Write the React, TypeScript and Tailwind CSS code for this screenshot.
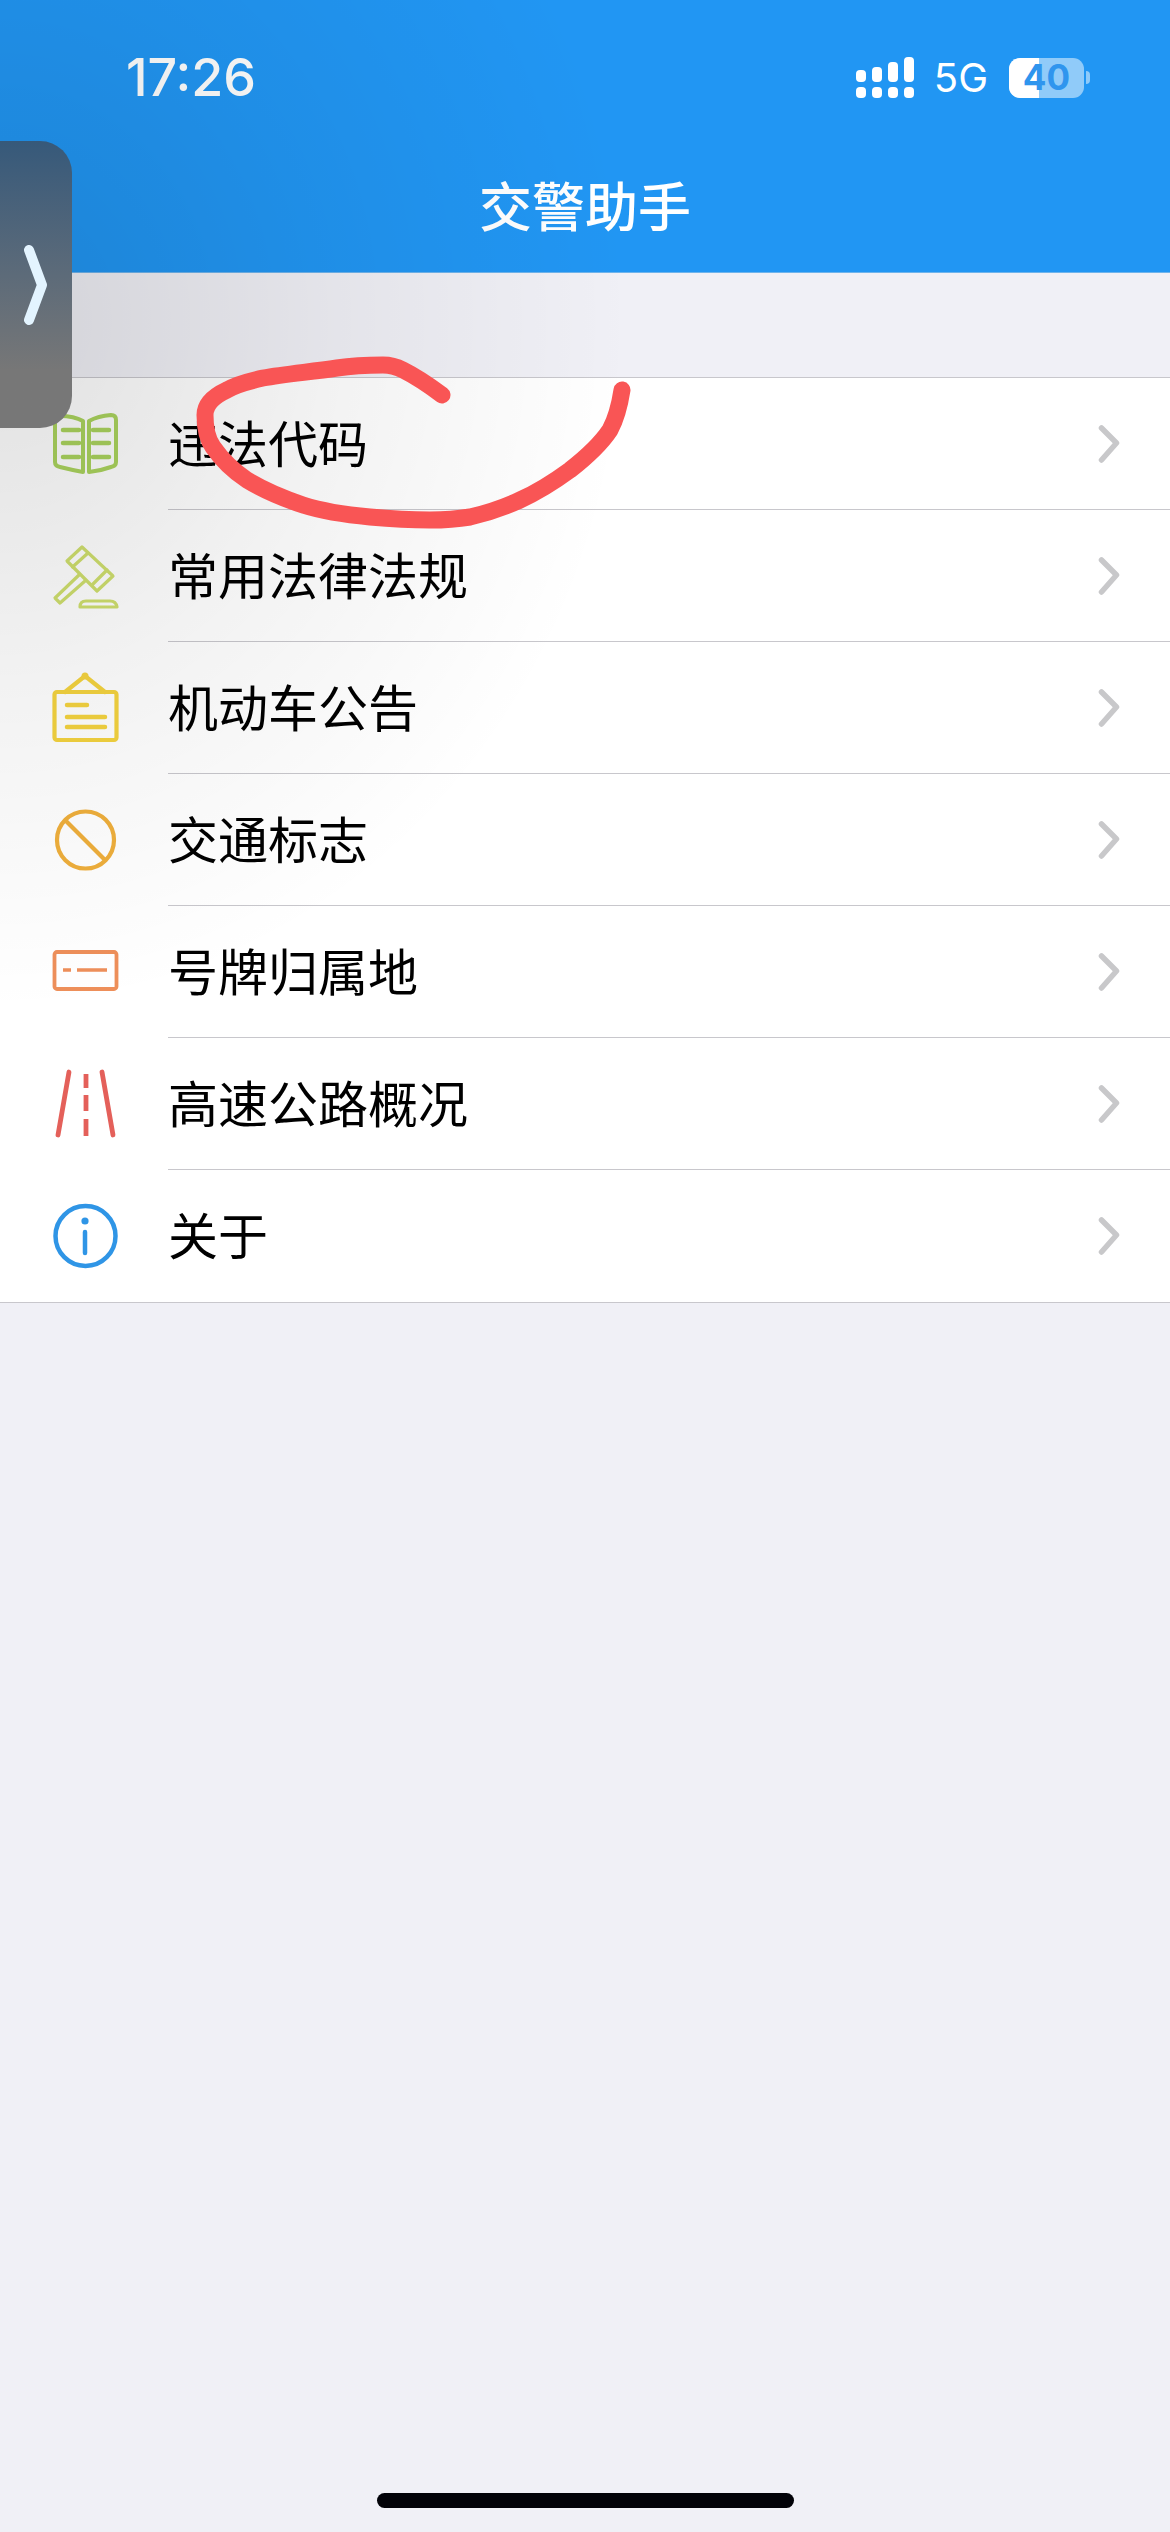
import React from 'react'

const cjk = 'font-["Noto_Sans_CJK_SC","Noto_Sans",sans-serif]'

// 菜单图标
const BookIcon = () => (
  <svg viewBox="0 0 66 66" className="w-[66px] h-[66px] overflow-visible" fill="none" stroke="#ABD45E" strokeLinecap="round" strokeLinejoin="round">
    <path strokeWidth="4" d="M3 9 Q3 5 8 5 Q22 5 31 10 L31 61 Q20 59 8 56 Q3 55 3 51 Z" />
    <path strokeWidth="4" d="M64 9 Q64 4 59 4 Q46 5 37 10 L37 61 Q48 60 59 56 Q64 55 64 51 Z" />
    <path strokeWidth="4.5" d="M11 19 H27 M11 32 H27 M11 46 H27 M41 19 H57 M41 32 H57 M41 46 H57" />
  </svg>
)

const GavelIcon = () => (
  <svg viewBox="0 0 66 66" className="w-[66px] h-[66px] overflow-visible" fill="none" stroke="#CFDF6E" strokeWidth="3.2" strokeLinejoin="round" strokeLinecap="round">
    <path d="M30 4 L15 18 L45 48 L61 33 Z" />
    <path d="M36 10 L20.5 24 M55 27 L40 42" />
    <path d="M27 32 L3 55 L8 60 L33 38" />
    <path d="M28 64 Q28 58 34 58 H58 Q64 58 65 64 Z" />
  </svg>
)

const BoardIcon = () => (
  <svg viewBox="0 0 66 66" className="w-[66px] h-[66px] overflow-visible" fill="none" stroke="#F4D33F" strokeLinecap="round" strokeLinejoin="round">
    <rect x="2.5" y="17" width="62" height="48" rx="2.5" strokeWidth="4.2" />
    <path strokeWidth="4.2" d="M13 17 L33 1 L53 17" />
    <circle cx="33" cy="1" r="3.5" fill="#F4D33F" stroke="none" />
    <path strokeWidth="4.5" d="M15 30 H35 M15 42 H53 M15 52 H53" />
  </svg>
)

const ForbidIcon = () => (
  <svg viewBox="0 0 66 66" className="w-[66px] h-[66px] overflow-visible" fill="none" stroke="#EFAF3C" strokeWidth="4.2">
    <circle cx="33.5" cy="33" r="28.5" />
    <path d="M13 13 L53 53" />
  </svg>
)

const PlateIcon = () => (
  <svg viewBox="0 0 66 66" className="w-[66px] h-[66px] overflow-visible" fill="none" stroke="#EE8F5A" strokeLinejoin="round">
    <rect x="2.5" y="13" width="62" height="37" rx="2.5" strokeWidth="3.8" />
    <path strokeWidth="3.5" d="M11 31 H19 M25 31 H55" />
  </svg>
)

const RoadIcon = () => (
  <svg viewBox="0 0 66 66" className="w-[66px] h-[66px] overflow-visible" fill="none" stroke="#E4605A" strokeWidth="4.8" strokeLinecap="round">
    <path d="M17 1 L6 64 M50 1 L61 64" />
    <path strokeLinecap="butt" d="M34 3 V17 M34 24 V40 M34 48 V65" />
  </svg>
)

const InfoIcon = () => (
  <svg viewBox="0 0 66 66" className="w-[66px] h-[66px] overflow-visible" fill="none" stroke="#2F95E6" strokeWidth="4.5" strokeLinecap="round">
    <circle cx="33.5" cy="33" r="30" />
    <circle cx="33" cy="18" r="3.6" fill="#2F95E6" stroke="none" />
    <path d="M33 29 V50" />
  </svg>
)

const menus = [
  { title: '违法代码', icon: <BookIcon /> },
  { title: '常用法律法规', icon: <GavelIcon /> },
  { title: '机动车公告', icon: <BoardIcon /> },
  { title: '交通标志', icon: <ForbidIcon /> },
  { title: '号牌归属地', icon: <PlateIcon /> },
  { title: '高速公路概况', icon: <RoadIcon /> },
  { title: '关于', icon: <InfoIcon /> },
]

const signalBars = ['h-[12px]', 'h-[15px]', 'h-[20px]', 'h-[25px]']

const App: React.FC = () => {
  return (
    <div className="relative min-h-[2532px] flex flex-col bg-[#F0F0F6] overflow-hidden">
      {/* 顶部栏 */}
      <header className="h-[273px] bg-[#2196F3] text-white border-b border-[#6fb4ec]">
        <div className="h-[169px] pt-[49px] pl-[126px] pr-[80px] flex items-start justify-between">
          <span className="font-['Inter',sans-serif] text-[52px] leading-[58px] font-medium">17:26</span>
          <div className="flex items-center mt-[8px]">
            <div className="flex gap-[6px] w-[58px]">
              {signalBars.map((h) => (
                <div key={h} className="w-[10px] h-[41px] flex flex-col justify-end gap-[5px]">
                  <div className={`${h} rounded-[4px] bg-white`} />
                  <div className="h-[11px] rounded-[4px] bg-white" />
                </div>
              ))}
            </div>
            <span className="ml-[20px] font-['Inter',sans-serif] text-[40px] leading-[40px] font-normal">5G</span>
            <div className="ml-[21px] relative w-[75px] h-[40px] rounded-[11px] bg-white/50">
              <div className="absolute left-0 top-0 bottom-0 w-[30px] rounded-l-[11px] bg-white" />
              <span className="absolute inset-0 flex items-center justify-center font-['Inter',sans-serif] text-[35px] leading-none font-bold text-[#2F95EE]">40</span>
            </div>
            <div className="ml-[2px] w-[4px] h-[13px] rounded-r-full bg-white/50" />
          </div>
        </div>
        <h1 className={`${cjk} text-center text-[53px] leading-[70px] font-medium`}>交警助手</h1>
      </header>

      {/* 菜单列表 */}
      <ul className="mt-[104px] bg-white border-y border-[#C8C7CC]">
        {menus.map((menu, i) => (
          <li key={menu.title} className="h-[132px] flex items-stretch">
            <div className="w-[168px] pl-[52px] flex items-center shrink-0">{menu.icon}</div>
            <div className={`flex-1 flex items-center justify-between pr-[50px] ${i < menus.length - 1 ? 'border-b border-[#C8C7CC]' : ''}`}>
              <span className={`${cjk} text-[50px] leading-[70px] text-black -translate-y-[3px]`}>{menu.title}</span>
              <svg viewBox="0 0 22 38" className="w-[22px] h-[38px]" fill="none" stroke="#C8C8CA" strokeWidth="5.5" strokeLinecap="round" strokeLinejoin="round">
                <path d="M3.5 3 L18.5 18 L3.5 35" />
              </svg>
            </div>
          </li>
        ))}
      </ul>

      {/* 悬浮按钮的阴影 */}
      <div className="absolute left-0 top-0 w-[620px] h-[1000px] pointer-events-none bg-[radial-gradient(ellipse_at_0px_320px,rgba(0,0,0,0.12)_0%,rgba(0,0,0,0.05)_38%,rgba(0,0,0,0)_72%)]" />

      {/* 红色圈注 */}
      <svg className="absolute left-0 top-0 w-[1170px] h-[600px] pointer-events-none" viewBox="0 0 1170 600" fill="none">
        <path
          d="M442 395 C430 386 415 376 403 370 C395 366 390 365 383 365 C365 365 350 366 337 368 C310 372 285 374 263 378 C245 382 235 385 227 390 C212 397 205 405 205 415 C205 428 208 440 213 447 C222 460 235 472 247 480 C265 491 285 499 303 505 C325 512 348 515 370 517 C392 519 412 520 430 520 C445 520 458 519 470 517 C488 513 505 507 520 500 C540 491 555 481 570 470 C588 456 600 445 610 430 C617 417 620 403 622 390"
          stroke="#F95555"
          strokeWidth="17"
          strokeLinecap="round"
          strokeLinejoin="round"
        />
      </svg>

      {/* 悬浮按钮 */}
      <div className="absolute left-0 top-[141px] w-[72px] h-[287px] rounded-r-[32px] bg-gradient-to-b from-[#36597A] to-[#777777] to-[80%] flex items-center pl-[24px]">
        <svg viewBox="0 0 24 80" className="w-[24px] h-[80px]" fill="none" stroke="#E3F4FF" strokeWidth="10" strokeLinecap="round" strokeLinejoin="round">
          <path d="M5 5 L18 40 L5 75" />
        </svg>
      </div>

      {/* Home 指示条 */}
      <div className="mt-auto mb-[24px] ml-[377px] w-[417px] h-[15px] rounded-full bg-[#020208]" />
    </div>
  )
}

export default App
